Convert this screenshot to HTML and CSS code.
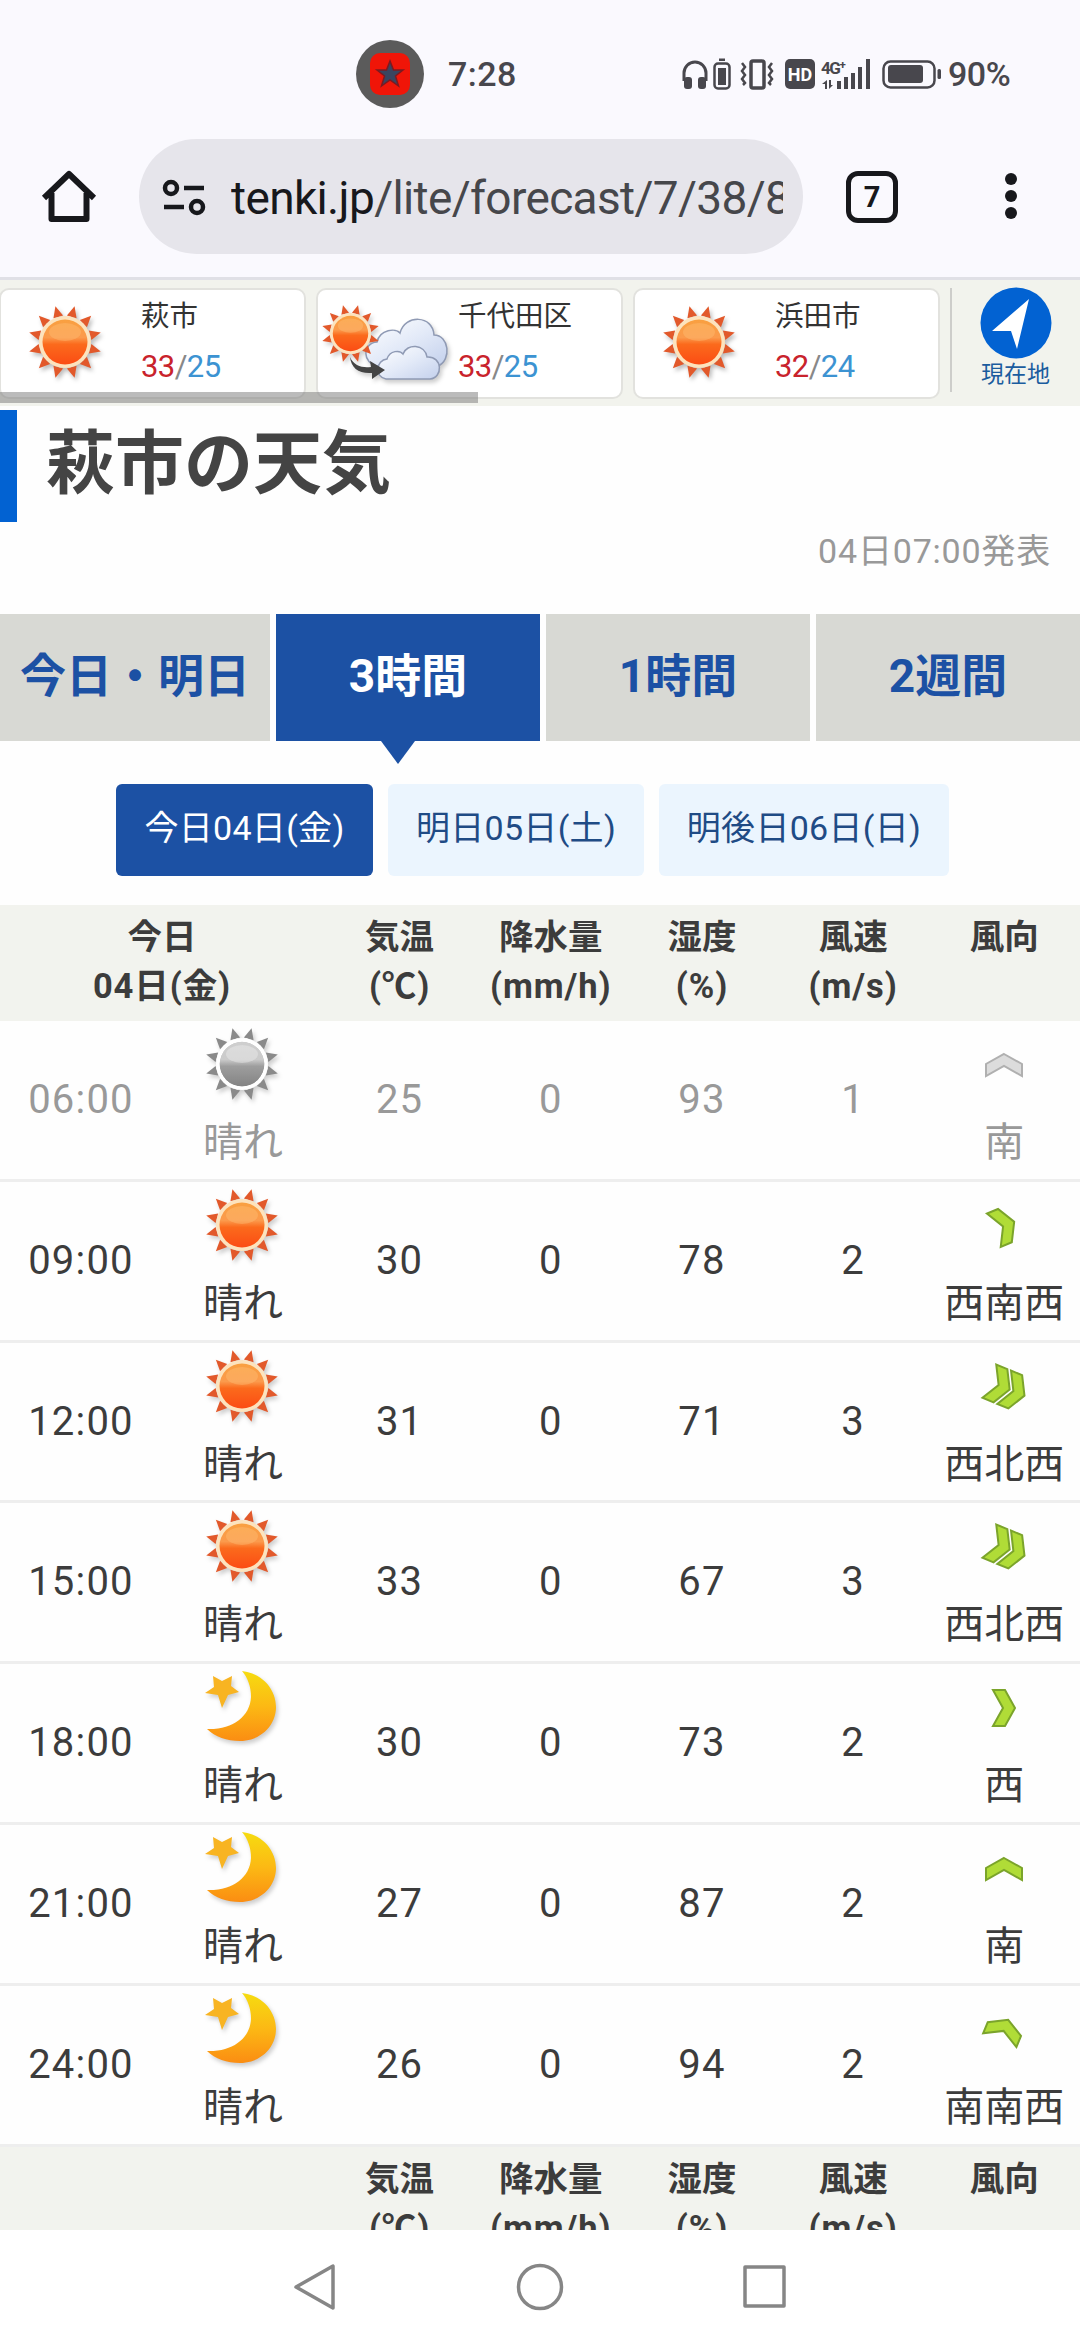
FILE: index.html
```html
<!DOCTYPE html>
<html lang="ja">
    <head>
        <meta charset="UTF-8" />
        <meta name="viewport" content="width=device-width, initial-scale=1.0" />
        <title>萩市の天気</title>
        <link rel="stylesheet" href="styles.css">
    </head>
    <body>
        <!-- shared icons -->
        <svg class="defs" width="0" height="0">
            <defs>
                <linearGradient id="sunFill" x1="0" y1="0" x2="0" y2="1">
                    <stop offset="0" stop-color="#f9a040" />
                    <stop offset="0.4" stop-color="#fb9a4c" />
                    <stop offset="0.55" stop-color="#fb6a1c" />
                    <stop offset="1" stop-color="#fb4c14" />
                </linearGradient>
                <linearGradient id="moonFill" x1="0" y1="0" x2="0" y2="1">
                    <stop offset="0" stop-color="#f6dc10" />
                    <stop offset="0.5" stop-color="#fcb914" />
                    <stop offset="1" stop-color="#fb8d12" />
                </linearGradient>
                <linearGradient id="cloudFill" x1="0" y1="0" x2="1" y2="1">
                    <stop offset="0" stop-color="#ffffff" />
                    <stop offset="0.5" stop-color="#e3eaf8" />
                    <stop offset="1" stop-color="#c3d0ec" />
                </linearGradient>
                <path id="ray" d="M-5 -26L0 -37L5 -26Z" />
            </defs>
            <symbol id="sun" viewBox="-40 -40 80 80">
                <g fill="#e2592b">
                    <use href="#ray" transform="rotate(15)" />
                    <use href="#ray" transform="rotate(45)" />
                    <use href="#ray" transform="rotate(75)" />
                    <use href="#ray" transform="rotate(105)" />
                    <use href="#ray" transform="rotate(135)" />
                    <use href="#ray" transform="rotate(165)" />
                    <use href="#ray" transform="rotate(195)" />
                    <use href="#ray" transform="rotate(225)" />
                    <use href="#ray" transform="rotate(255)" />
                    <use href="#ray" transform="rotate(285)" />
                    <use href="#ray" transform="rotate(315)" />
                    <use href="#ray" transform="rotate(345)" />
                </g>
                <circle r="26" fill="#fde3bd" />
                <circle r="22.5" fill="url(#sunFill)" />
                <ellipse cy="-10" rx="16" ry="9" fill="#ffc078" opacity="0.4" />
            </symbol>
            <symbol id="moon" viewBox="-40 -40 80 80">
                <path d="M0 -36C20 -34 34 -18 34 0C34 19 18 34 -2 34C-15 34 -27 30 -35 22C-10 23 8 10 9 -10C9 -20 6 -29 0 -36Z" fill="url(#moonFill)" />
                <path d="M-29 -31L-20 -26L-10 -31L-11 -21L-3 -15L-14 -12L-20 1L-24 -12L-37 -14L-28 -20Z" fill="#f8b422" />
            </symbol>
            <symbol id="wind1" viewBox="-25 -25 50 50">
                <path d="M0 -11L18 -1V11L0 1L-18 11V-1Z" />
            </symbol>
            <symbol id="wind2" viewBox="-25 -25 50 50">
                <path d="M0 -20L18 -10V2L0 -8L-18 2V-10Z" />
                <path d="M0 -4L18 6V18L0 8L-18 18V6Z" />
            </symbol>
        </svg>

        <header class="status">
            <div class="app-badge">
                <svg width="42" height="44" viewBox="0 0 42 44">
                    <rect x="1" y="1" width="40" height="42" rx="10" fill="#f01508" />
                    <path d="M21 9L24.500 18H34L26.500 24L29.500 34L21 28L12.500 34L15.500 24L8 18H17.500Z" fill="#3a4560" stroke="#7d1a20" stroke-width="1.500" />
                </svg>
            </div>
            <span class="clock">7:28</span>
            <svg class="status-icons" width="260" height="34" viewBox="682 56 260 34">
                <g fill="none" stroke="#48474d" stroke-width="3">
                    <path d="M684 80V72a11 11 0 0 1 22 0V80" />
                    <rect x="714.500" y="62.500" width="15" height="25" rx="3.500" stroke-width="2.500" />
                    <rect x="751" y="60" width="13" height="27" rx="2" stroke-width="3.500" />
                    <path d="M742 62l3 4l-3 4l3 4l-3 4l3 4l-2 2M772 62l-3 4l3 4l-3 4l3 4l-3 4l2 2" stroke-width="2.500" />
                    <rect x="883.500" y="60.500" width="51" height="26" rx="7" stroke-width="2.500" />
                </g>
                <g fill="#48474d">
                    <rect x="684" y="76" width="8" height="12" rx="3" />
                    <rect x="698" y="76" width="8" height="12" rx="3" />
                    <rect x="718" y="67" width="8" height="17" />
                    <rect x="719" y="57.500" width="6" height="2.500" />
                    <rect x="785" y="58" width="30" height="30" rx="5" />
                    <path d="M837 80h4v8h-4zM844 76h4v12h-4zM851 72h4v16h-4zM858 66h4v22h-4zM866 58h4v30h-4z" />
                    <path d="M827 79v9h-2v-5h-3zM829 79v9l4-4h-2v-5z" />
                    <rect x="888" y="64" width="35" height="18" rx="3" />
                    <rect x="937.500" y="68" width="3.500" height="10" rx="1.500" />
                </g>
                <text x="800" y="80" class="hd">HD</text>
                <text x="821" y="73" class="net">4G⁺</text>
            </svg>
            <span class="charge">90%</span>
        </header>

        <nav class="toolbar">
            <svg class="home" width="56" height="56" viewBox="0 0 56 56">
                <path d="M3 29L28 5L53 29M10.500 24V50H45.500V24" fill="none" stroke="#17181c" stroke-width="6" stroke-linejoin="round" />
            </svg>
            <div class="address">
                <svg width="44" height="40" viewBox="0 0 44 40" fill="none" stroke="#17181c" stroke-width="4.500">
                    <circle cx="9" cy="10" r="6" />
                    <circle cx="35" cy="29" r="6" />
                    <path d="M22 10H42M2 29H22" />
                </svg>
                <div class="url">tenki.jp<span>/lite/forecast/7/38/8</span></div>
            </div>
            <div class="tab-count">7</div>
            <div class="menu"><i></i><i></i><i></i></div>
        </nav>

        <section class="cities">
            <div class="city">
                <svg class="city-sun" width="80" height="80"><use href="#sun" /></svg>
                <div>
                    <p>萩市</p>
                    <p class="temp"><b>33</b>/<em>25</em></p>
                </div>
            </div>
            <div class="city">
                <svg class="city-mix" width="134" height="84" viewBox="0 0 134 84">
                    <g stroke="#8f9ab4" stroke-width="1.500" fill="url(#cloudFill)">
                        <path d="M62 64C46 62 46 41 61 40C64 27 80 26 84 31C89 12 117 13 118 33C133 33 136 58 122 64Z" />
                        <path d="M70 77C58 75 60 58 71 57C74 48 84 48 87 52C91 41 109 42 111 55C127 54 127 76 114 77Z" />
                    </g>
                    <use href="#sun" x="3" y="0" width="63" height="63" />
                    <path d="M34 55C38 64 46 66 55 65L54 59L69 68L56 77V71C43 72 35 66 34 55Z" fill="#444" />
                </svg>
                <div>
                    <p>千代田区</p>
                    <p class="temp"><b>33</b>/<em>25</em></p>
                </div>
            </div>
            <div class="city">
                <svg class="city-sun" width="80" height="80"><use href="#sun" /></svg>
                <div>
                    <p>浜田市</p>
                    <p class="temp"><b>32</b>/<em>24</em></p>
                </div>
            </div>
            <div class="here">
                <svg width="72" height="72" viewBox="0 0 72 72">
                    <circle cx="36" cy="36" r="35.500" fill="#0262d2" />
                    <path d="M49 12L37 62L31 44L12 44Z" fill="#fff" />
                </svg>
                現在地
            </div>
            <div class="scrollbar"></div>
        </section>

        <main>
            <h1>萩市の天気</h1>
            <p class="announced">04日07:00発表</p>

            <div class="tabs">
                <a>今日・明日</a>
                <a class="active">3時間</a>
                <a>1時間</a>
                <a>2週間</a>
            </div>

            <div class="days">
                <a class="active">今日04日(金)</a>
                <a>明日05日(土)</a>
                <a>明後日06日(日)</a>
            </div>

            <div class="row head">
                <span class="date">今日<br><small>04日(金)</small></span>
                <span>気温<br><small>(℃)</small></span>
                <span>降水量<br><small>(mm/h)</small></span>
                <span>湿度<br><small>(%)</small></span>
                <span>風速<br><small>(m/s)</small></span>
                <span>風向</span>
            </div>
            <div class="row past">
                <span>06:00</span>
                <div><svg class="weather"><use href="#sun" /></svg>晴れ</div>
                <span>25</span><span>0</span><span>93</span><span>1</span>
                <div><svg class="wind"><use href="#wind1" /></svg>南</div>
            </div>
            <div class="row">
                <span>09:00</span>
                <div><svg class="weather"><use href="#sun" /></svg>晴れ</div>
                <span>30</span><span>0</span><span>78</span><span>2</span>
                <div><svg class="wind wsw"><use href="#wind1" /></svg>西南西</div>
            </div>
            <div class="row">
                <span>12:00</span>
                <div><svg class="weather"><use href="#sun" /></svg>晴れ</div>
                <span>31</span><span>0</span><span>71</span><span>3</span>
                <div><svg class="wind wnw"><use href="#wind2" /></svg>西北西</div>
            </div>
            <div class="row">
                <span>15:00</span>
                <div><svg class="weather"><use href="#sun" /></svg>晴れ</div>
                <span>33</span><span>0</span><span>67</span><span>3</span>
                <div><svg class="wind wnw"><use href="#wind2" /></svg>西北西</div>
            </div>
            <div class="row">
                <span>18:00</span>
                <div><svg class="weather"><use href="#moon" /></svg>晴れ</div>
                <span>30</span><span>0</span><span>73</span><span>2</span>
                <div><svg class="wind w"><use href="#wind1" /></svg>西</div>
            </div>
            <div class="row">
                <span>21:00</span>
                <div><svg class="weather"><use href="#moon" /></svg>晴れ</div>
                <span>27</span><span>0</span><span>87</span><span>2</span>
                <div><svg class="wind"><use href="#wind1" /></svg>南</div>
            </div>
            <div class="row">
                <span>24:00</span>
                <div><svg class="weather"><use href="#moon" /></svg>晴れ</div>
                <span>26</span><span>0</span><span>94</span><span>2</span>
                <div><svg class="wind ssw"><use href="#wind1" /></svg>南南西</div>
            </div>
            <div class="row head">
                <span class="date"></span>
                <span>気温<br><small>(℃)</small></span>
                <span>降水量<br><small>(mm/h)</small></span>
                <span>湿度<br><small>(%)</small></span>
                <span>風速<br><small>(m/s)</small></span>
                <span>風向</span>
            </div>
        </main>

        <footer>
            <svg width="492" height="50" viewBox="0 0 492 50" fill="none" stroke="#868686" stroke-width="3.500" stroke-linejoin="round">
                <path d="M39 4V46L2 25Z" />
                <circle cx="246" cy="25" r="21.500" />
                <rect x="451" y="5" width="39" height="39" />
            </svg>
        </footer>
    </body>
</html>
```
FILE: styles.css
```css
* {
    box-sizing: border-box;
}

body {
    margin: 0;
    height: 2344px;
    display: flex;
    flex-direction: column;
    overflow: hidden;
    background: #fefefe;
    color: #3c3c3c;
    font-family: Roboto, "Noto Sans CJK JP", sans-serif;
}

p, h1 {
    margin: 0;
}

svg {
    display: block;
    flex: none;
}

.defs {
    position: absolute;
}

/* phone status bar */
.status {
    flex: none;
    height: 125px;
    padding: 22px 0 0 356px;
    display: flex;
    align-items: center;
    background: #faf9fe;
    color: #48474d;
    font-size: 34px;
    font-weight: 500;
}

.app-badge {
    width: 68px;
    height: 68px;
    display: flex;
    align-items: center;
    justify-content: center;
    border-radius: 50%;
    background: #5b5b5b;
}

.clock {
    width: 234px;
    margin-left: 24px;
    letter-spacing: 0.5px;
}

.charge {
    margin-left: 6px;
    letter-spacing: -0.5px;
}

.hd {
    fill: #fff;
    font-size: 18px;
    font-weight: 700;
    text-anchor: middle;
}

.net {
    fill: #48474d;
    font-size: 17px;
    font-weight: 700;
    letter-spacing: -1.5px;
}

/* browser toolbar */
.toolbar {
    flex: none;
    height: 155px;
    padding: 14px 0 0 41px;
    display: flex;
    align-items: flex-start;
    background: #faf9fe;
    border-bottom: 3px solid #e0e0e6;
}

.home {
    margin-top: 30px;
}

.address {
    width: 664px;
    height: 115px;
    margin-left: 42px;
    padding: 2px 20px 0 23px;
    display: flex;
    align-items: center;
    gap: 25px;
    border-radius: 58px;
    background: #e6e5eb;
}

.url {
    width: 552px;
    overflow: hidden;
    white-space: nowrap;
    color: #17181c;
    font-size: 46px;
    line-height: 60px;
    letter-spacing: -0.65px;
}

.url span {
    color: #46474b;
}

.tab-count {
    width: 52px;
    height: 52px;
    margin: 32px 0 0 43px;
    border: 5px solid #17181c;
    border-radius: 12px;
    color: #17181c;
    font-size: 29px;
    font-weight: 700;
    line-height: 43px;
    text-align: center;
}

.menu {
    margin: 34px 0 0 107px;
    display: grid;
    gap: 5px;
}

.menu i {
    width: 12px;
    height: 12px;
    border-radius: 50%;
    background: #17181c;
}

/* registered cities */
.cities {
    position: relative;
    flex: none;
    height: 126px;
    padding-top: 8px;
    display: flex;
    gap: 10px;
    margin-left: -1px;
    background: #f2f3ed;
}

.city {
    flex: none;
    width: 307px;
    height: 111px;
    display: flex;
    border: 2px solid #e2e2de;
    border-radius: 10px;
    background: #fff;
}

.city p {
    color: #333;
    font-size: 28.5px;
    line-height: 40px;
    margin-top: 7px;
}

.city .temp {
    color: #888;
    font-size: 31px;
    margin-top: 10px;
    letter-spacing: -0.6px;
}

.temp b {
    color: #c9232c;
    font-weight: 400;
}

.temp em {
    color: #3c93d2;
    font-style: normal;
}

.city-sun {
    margin: 12px 36px 0 24px;
    filter: drop-shadow(2px 3px 2px #bbb);
}

.city-mix {
    margin: 12px 8px 0 -2px;
    filter: drop-shadow(2px 3px 2px #ccc);
}

.here {
    width: 129px;
    height: 104px;
    display: flex;
    flex-direction: column;
    align-items: center;
    border-left: 2px solid #cdcdca;
    color: #1b5c9e;
    font-size: 23px;
    line-height: 32px;
}

.here svg {
    margin-top: -1px;
}

.scrollbar {
    position: absolute;
    left: 1px;
    bottom: 3px;
    width: 478px;
    height: 11px;
    background: rgba(120, 120, 120, 0.5);
}

main {
    flex: none;
    height: 1824px;
    overflow: hidden;
}

h1 {
    height: 112px;
    margin-top: 4px;
    padding-left: 29px;
    border-left: 17px solid #0262d2;
    color: #444;
    font-size: 69px;
    line-height: 110px;
}

.announced {
    padding: 4px 29px 0 0;
    color: #999;
    font-size: 34px;
    line-height: 50px;
    text-align: right;
    letter-spacing: 0.8px;
}

.tabs {
    height: 127px;
    margin-top: 38px;
    display: grid;
    grid-template-columns: 270px 264px 264px 264px;
    gap: 6px;
}

.tabs a {
    position: relative;
    background: #d8d9d4;
    color: #1c51a4;
    font-size: 46px;
    font-weight: 700;
    line-height: 125px;
    text-align: center;
}

.tabs .active {
    background: #1c51a4;
    color: #fff;
}

/* marker under the selected tab */
.tabs .active::after {
    content: "";
    position: absolute;
    left: 105px;
    top: 100%;
    border: 17px solid transparent;
    border-top: 23px solid #1c51a4;
    border-bottom: 0;
}

.days {
    height: 92px;
    margin: 43px 0 29px;
    padding-left: 116px;
    display: grid;
    grid-template-columns: 257px 256px 290px;
    gap: 15px;
}

.days a {
    border-radius: 6px;
    background: #ebf5fe;
    color: #1f4b85;
    font-size: 34px;
    line-height: 88px;
    text-align: center;
    letter-spacing: 0.3px;
}

.days .active {
    background: #1c51a4;
    color: #fff;
}

/* forecast table */
.row {
    height: 160.8px;
    display: grid;
    grid-template-columns: 162px 162px repeat(5, 151.2px);
    border-bottom: 3px solid #eeeeee;
    font-size: 40px;
    text-align: center;
}

.row > span {
    line-height: 157px;
    letter-spacing: 1.2px;
}

.row > div {
    line-height: 63px;
    white-space: nowrap;
}

.head {
    height: 116px;
    padding-top: 8px;
    border: 0;
    background: #f2f3ee;
}

.head > span {
    font-size: 34.5px;
    font-weight: 700;
    line-height: 49px;
    letter-spacing: 0;
}

.head small {
    font-size: inherit;
    letter-spacing: 0.9px;
}

.head .date {
    grid-column: span 2;
}

.past {
    color: #999;
}

.weather {
    width: 80px;
    height: 80px;
    margin: 3px 0 7px 40px;
    filter: drop-shadow(2px 3px 2px #ccc);
}

.past .weather {
    filter: grayscale(1) brightness(1.2) drop-shadow(2px 3px 2px #ccc);
}

.wind {
    width: 50px;
    height: 50px;
    margin: 19px auto 21px;
    overflow: visible;
    fill: #b0dc37;
    stroke: #7ba42b;
    stroke-width: 2px;
}

.past .wind {
    fill: #dcdcdc;
    stroke: #b0b0b0;
}

.ssw {
    transform: rotate(22.5deg);
}

.wsw {
    transform: rotate(67.5deg);
}

.w {
    transform: rotate(90deg);
}

.wnw {
    transform: translate(2px, 1px) rotate(112.5deg);
}

footer {
    flex: none;
    height: 114px;
    padding: 32px 0 0 294px;
    background: #fff;
}
```
